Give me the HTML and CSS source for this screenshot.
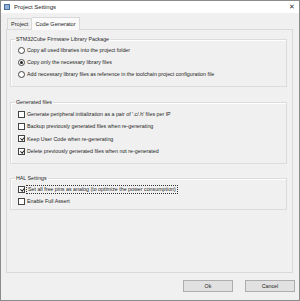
FILE: index.html
```html
<!DOCTYPE html>
<html>
  <head>
    <meta charset="UTF-8" />
    <title>Project Settings</title>
    <link rel="stylesheet" href="styles.css">
  </head>
  <body>
    <div class="window">
      <div class="titlebar">
        <svg class="app-icon" width="6" height="6" viewBox="0 0 6 6">
          <rect x="0.5" y="0.5" width="5" height="5" fill="#8fb0d8" stroke="#4a6f9c" stroke-width="1"/>
        </svg>
        <span class="title">Project Settings</span>
        <span class="close">&#x2715;</span>
      </div>

      <div class="tabs">
        <div class="tab">Project</div>
        <div class="tab active">Code Generator</div>
      </div>

      <div class="panel">
        <fieldset class="group group-lib">
          <legend>STM32Cube Firmware Library Package</legend>
          <div class="opt"><span class="radio"></span>Copy all used libraries into the project folder</div>
          <div class="opt"><span class="radio on"></span>Copy only the necessary library files</div>
          <div class="opt"><span class="radio"></span>Add necessary library files as reference in the toolchain project configuration file</div>
        </fieldset>

        <fieldset class="group group-gen">
          <legend>Generated files</legend>
          <div class="opt"><span class="check"></span>Generate peripheral initialization as a pair of '.c/.h' files per IP</div>
          <div class="opt"><span class="check"></span>Backup previously generated files when re-generating</div>
          <div class="opt"><span class="check on"></span>Keep User Code when re-generating</div>
          <div class="opt"><span class="check on"></span>Delete previously generated files when not re-generated</div>
        </fieldset>

        <fieldset class="group group-hal">
          <legend>HAL Settings</legend>
          <div class="opt"><span class="check on"></span><span class="focus">Set all free pins as analog (to optimize the power consumption)</span></div>
          <div class="opt"><span class="check"></span>Enable Full Assert</div>
        </fieldset>
      </div>

      <div class="buttons">
        <button type="button" class="btn">Ok</button>
        <button type="button" class="btn">Cancel</button>
      </div>
    </div>
  </body>
</html>
```

FILE: styles.css
```css
body {
    margin: 0;
    padding: 0;
    font-family: "Liberation Sans", Arial, sans-serif;
    font-size: 5.3px;
    color: #1e1e1e;
    background-color: #f0f0f0;
}

.window {
    width: 300px;
    height: 301px;
    box-sizing: border-box;
    border: 1px solid #8c8c8c;
    background-color: #f0f0f0;
    display: flex;
    flex-direction: column;
}

/* title bar */
.titlebar {
    height: 12px;
    background-color: #fff;
    display: flex;
    align-items: center;
    padding-left: 3px;
    flex-shrink: 0;
}

.app-icon {
    margin-right: 4px;
}

.title {
    font-size: 6px;
    flex: 1;
}

.close {
    font-size: 7px;
    color: #333;
    margin-right: 4px;
}

/* tabs */
.tabs {
    display: flex;
    align-items: flex-end;
    height: 12px;
    margin-top: 4px;
    padding-left: 6px;
    flex-shrink: 0;
}

.tab {
    height: 10px;
    line-height: 10px;
    padding: 0 3px;
    font-size: 5.6px;
    border: 1px solid #d9d9d9;
    border-bottom: none;
    background-color: #f0f0f0;
}

.tab.active {
    height: 12px;
    line-height: 12px;
    background-color: #fafafa;
    border-left: none;
    margin-bottom: -1px;
    position: relative;
}

/* tab panel */
.panel {
    height: 244px;
    box-sizing: border-box;
    margin: 0 6px 0 5px;
    border: 1px solid #d9d9d9;
    padding: 5px 5px 0 3px;
    display: flex;
    flex-direction: column;
}

.group {
    margin: 0;
    padding: 0 0 6px 4px;
    border: 1px solid #dcdcdc;
    box-shadow: inset 1px 1px 0 #fff;
    min-width: 0;
}

.group legend {
    padding: 0 1px;
    line-height: 8px;
}

.group-lib {
    padding-top: 1px;
}

.group-gen {
    margin-top: 11px;
    padding-top: 2px;
}

.group-hal {
    margin-top: 10px;
    padding-top: 1px;
    padding-bottom: 2px;
}

.opt {
    height: 12px;
    display: flex;
    align-items: center;
    margin-left: 3px;
    white-space: nowrap;
}

.group-gen .opt {
    height: 12.3px;
}

.radio {
    width: 5px;
    height: 5px;
    border: 1px solid #444;
    border-radius: 50%;
    background-color: #fff;
    margin-right: 2px;
    position: relative;
    flex-shrink: 0;
}

.radio.on::after {
    content: "";
    position: absolute;
    left: 1px;
    top: 1px;
    width: 3px;
    height: 3px;
    border-radius: 50%;
    background-color: #222;
}

.check {
    width: 5px;
    height: 5px;
    border: 1px solid #444;
    background-color: #fff;
    margin-right: 2px;
    position: relative;
    flex-shrink: 0;
}

.check.on::after {
    content: "";
    position: absolute;
    left: 1.5px;
    top: 0;
    width: 1.5px;
    height: 3px;
    border-right: 1px solid #222;
    border-bottom: 1px solid #222;
    transform: rotate(40deg);
}

.focus {
    outline: 1px dotted #333;
    padding: 0 1px;
    line-height: 7px;
}

/* dialog buttons */
.buttons {
    display: flex;
    justify-content: flex-end;
    gap: 12px;
    margin-top: 7px;
    padding-right: 4px;
}

.btn {
    width: 50px;
    height: 12px;
    padding: 0;
    border: 1px solid #adadad;
    background-color: #e1e1e1;
    font-family: "Liberation Sans", Arial, sans-serif;
    font-size: 5.3px;
    color: #1e1e1e;
}
```
